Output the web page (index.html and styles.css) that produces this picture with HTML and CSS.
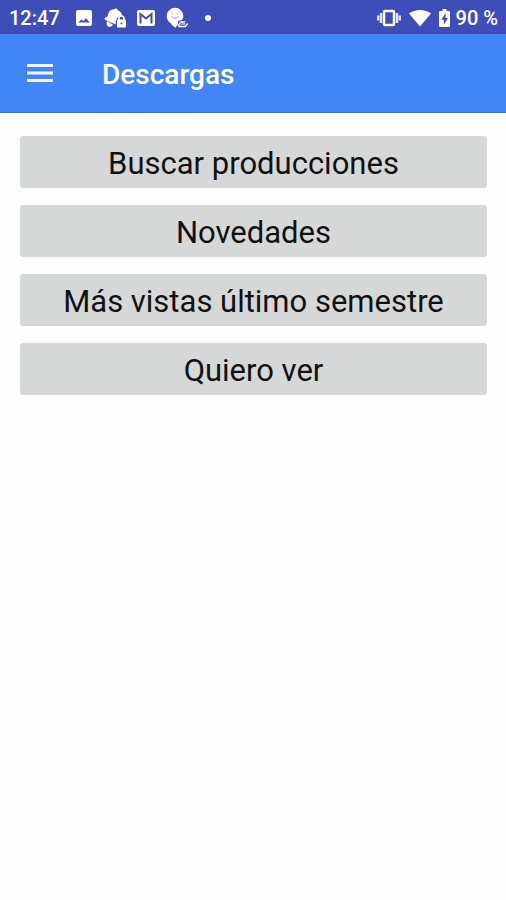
FILE: index.html
```html
<!DOCTYPE html>
<html lang="es">
<head>
<meta charset="utf-8">
<meta name="viewport" content="width=device-width, initial-scale=1">
<title>Descargas</title>
<link rel="stylesheet" href="styles.css">
</head>
<body>
<div class="status-bar">
  <div class="status-group status-left">
    <span class="clock">12:47</span>
    <svg class="icon-image" width="16" height="18" viewBox="0 0 16 18" aria-hidden="true">
      <path fill="#fff" fill-rule="evenodd" d="M2 1h12a2 2 0 0 1 2 2v12a2 2 0 0 1-2 2H2a2 2 0 0 1-2-2V3a2 2 0 0 1 2-2zM2.500 13.500h11l-3.500-4.500-2.800 3.200-1.800-2z"/>
    </svg>
    <svg width="22" height="20" viewBox="0 0 22 20" aria-hidden="true">
      <path fill="#fff" d="M9 1.500L12.500.2l1.500 2.300c2.500.8 3.800 2.500 4 5.200-3 .2-5.300 2-5.300 4.300l-1 1v3.500L1 11.800l-.6-1.500 3-1.800 1.300-4C5.500 2.700 7 1.600 9 1.500z"/>
      <path fill="#fff" d="M3 13l6 3.800c-1.200 2-3.500 2.600-5 1.700-1.500-1-1.800-3.500-1-5.500z"/>
      <path fill="none" stroke="#fff" stroke-width="1.500" d="M15 12v-1.500a2.500 2.500 0 0 1 5 0V12"/>
      <rect x="13" y="11.500" width="9" height="8" rx="1" fill="#fff"/>
      <circle cx="17.500" cy="15.500" r="1" fill="#3f4db8"/>
    </svg>
    <svg width="20" height="18" viewBox="0 0 20 18" aria-hidden="true">
      <rect x="1" y="1" width="18" height="16" rx="2" fill="#fff"/>
      <path fill="none" stroke="#3f4db8" stroke-width="2" d="M4.500 14.500V5l5.500 4.500L15.500 5v9.500"/>
    </svg>
    <svg width="22" height="22" viewBox="0 0 22 22" aria-hidden="true">
      <path fill="#fff" d="M9 .8a8.300 8.300 0 0 1 8.300 8.200c0 1.600-.4 2.700-1.200 3.800L12 14v3l-2.500 3.800C7 18.800 5.500 17.700 4.500 16 2 14.500.7 11.700.7 9A8.300 8.300 0 0 1 9 .8z"/>
      <g fill="none" stroke="#8f98d8" stroke-width=".9" stroke-linecap="round">
        <path d="M5.500 9.500c1.500 2.500 5.500 2.500 7 0M6.300 6.300v.8M11.700 6.300v.8"/>
      </g>
      <path fill="#fff" d="M13.500 14.200h6l-.7 3.300h-5.600z"/>
      <path fill="none" stroke="#fff" stroke-width="1.500" d="M11.800 17.200l1.500 2.300h6l2.300-3"/>
      <path stroke="#3f4db8" stroke-width=".8" fill="none" d="M13.800 15.500l2.500 1.200 2.700-1.200"/>
    </svg>
    <svg width="8" height="8" viewBox="0 0 8 8" class="icon-dot" aria-hidden="true"><circle cx="4" cy="4" r="3" fill="#fff"/></svg>
  </div>
  <div class="status-group status-right">
    <svg width="24" height="18" viewBox="0 0 24 18" aria-hidden="true">
      <rect x="7" y="2" width="10" height="14" rx="1" fill="none" stroke="#fff" stroke-width="2.400"/>
      <path stroke="#fff" stroke-width="2.400" stroke-opacity=".85" d="M4 4v10M20 4v10M1.200 6.500v5M22.800 6.500v5"/>
    </svg>
    <svg width="22" height="18" viewBox="0 0 22 18" aria-hidden="true">
      <path fill="#fff" d="M0 4.500C6-.3 16-.3 22 4.500L11 17.500z"/>
    </svg>
    <svg class="icon-battery" width="11" height="20" viewBox="0 0 11 20" aria-hidden="true">
      <path fill="#fff" d="M3.500 1h4v2H10a1 1 0 0 1 1 1v14a1 1 0 0 1-1 1H1a1 1 0 0 1-1-1V4a1 1 0 0 1 1-1h2.500z"/>
      <path fill="#3f4db8" d="M6.500 5L2.300 11.800h2.500V17L9 10H6.500z"/>
    </svg>
    <span class="level">90 %</span>
  </div>
</div>
<header class="app-bar">
  <button class="menu-button" type="button" aria-label="Menú">
    <svg width="28" height="20" viewBox="0 0 28 20" aria-hidden="true">
      <path stroke="#f2f6ff" stroke-width="3" d="M1 2.500h26M1 10h26M1 17.500h26"/>
    </svg>
  </button>
  <h1 class="title">Descargas</h1>
</header>
<main class="options">
  <button class="option" type="button">Buscar producciones</button>
  <button class="option" type="button">Novedades</button>
  <button class="option" type="button">Más vistas último semestre</button>
  <button class="option" type="button">Quiero ver</button>
</main>
</body>
</html>
```
FILE: styles.css
```css
* {
  box-sizing: border-box;
}

body {
  margin: 0;
  min-height: 100vh;
  background: #fefefe;
  font-family: Roboto, "Liberation Sans", sans-serif;
}

svg {
  display: block;
  flex: none;
}

.status-bar {
  display: flex;
  justify-content: space-between;
  align-items: center;
  height: 34px;
  padding: 2px 8px 0 9px;
  background: #3f4db8;
  color: #fff;
  font-size: 20px;
  line-height: 24px;
  font-weight: 500;
}

.status-group {
  display: flex;
  align-items: center;
}

.status-left {
  gap: 10px;
}

.status-right {
  gap: 8px;
}

.icon-image {
  margin: 0 2px 0 6px;
}

.icon-dot {
  margin-left: 6px;
}

.level {
  margin-left: -2px;
}

.app-bar {
  display: flex;
  align-items: center;
  height: 79px;
  padding: 0 16px;
  background: #4285f4;
  border-bottom: 1px solid #2f78e0;
  color: #fff;
}

.menu-button {
  display: grid;
  place-items: center;
  width: 48px;
  height: 48px;
  padding: 0;
  border: 0;
  background: none;
}

.title {
  margin: 0 0 0 38px;
  padding-top: 4px;
  font-size: 28px;
  line-height: 36px;
  font-weight: 500;
}

.options {
  display: flex;
  flex-direction: column;
  gap: 17px;
  padding: 23px 19px 23px 20px;
}

.option {
  padding: 10px 8px 6px;
  border: 0;
  border-radius: 3px;
  background: #d6d8d7;
  color: #111;
  font-family: inherit;
  font-size: 31px;
  line-height: 36px;
}
```
